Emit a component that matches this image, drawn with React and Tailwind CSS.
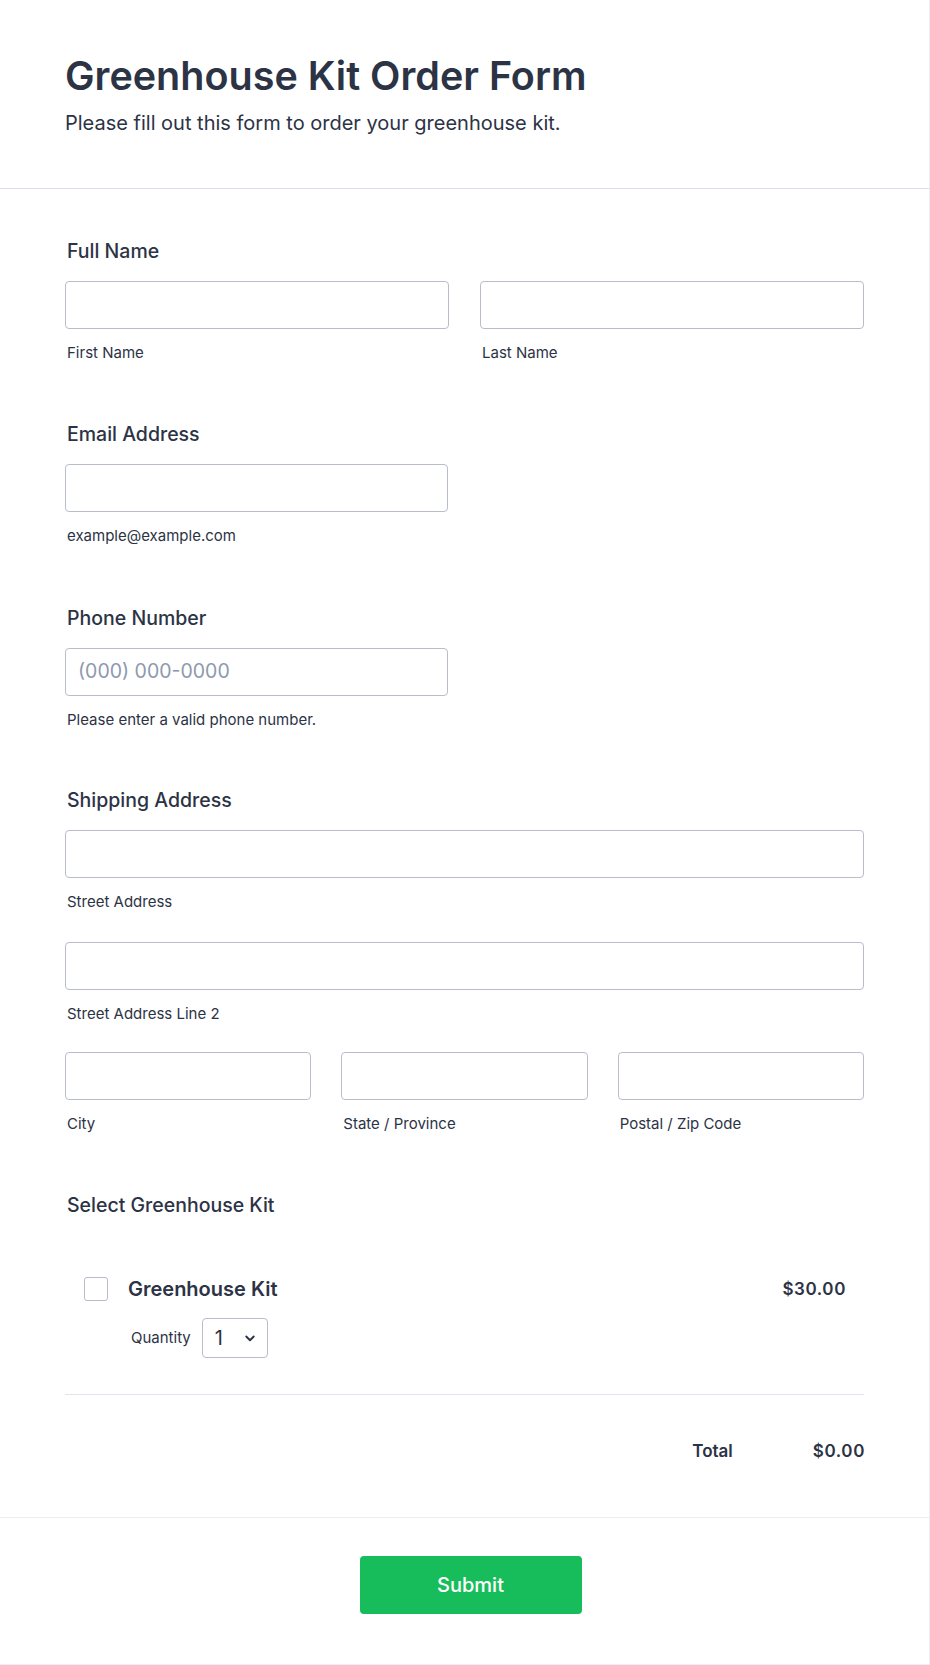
import React from "react";

const txt = "text-[#2c3345]";

function Field({ className = "" }) {
  return (
    <div
      className={`h-[48px] rounded-[4px] border border-[#b8bdc9] bg-white ${className}`}
    />
  );
}

function Sub({ children }) {
  return (
    <div className={`mt-[14px] text-[15px] leading-[20px] ${txt} pl-[2px]`}>
      {children}
    </div>
  );
}

function Label({ children }) {
  return (
    <div className={`text-[19.5px] leading-[24px] font-medium ${txt} pl-[2px] mb-[18px]`}>
      {children}
    </div>
  );
}

export default function App() {
  return (
    <div
      className="w-[930px] min-h-[1665px] bg-white border-r border-b border-[#ededf5]"
      style={{ fontFamily: "Inter, 'Noto Sans', sans-serif" }}
    >
      {/* Header */}
      <div className="px-[65px] pt-[52px] pb-[51px] border-b border-[#dcdcea]">
        <h1 className={`text-[39.5px] leading-[48px] font-semibold ${txt}`}>
          Greenhouse Kit Order Form
        </h1>
        <p className={`mt-[9px] text-[20px] leading-[28px] ${txt}`}>
          Please fill out this form to order your greenhouse kit.
        </p>
      </div>

      {/* Body */}
      <div className="px-[65px] pt-[50px]">
        {/* Full Name */}
        <div>
          <Label>Full Name</Label>
          <div className="grid grid-cols-2 gap-[31px]">
            <div>
              <Field />
              <Sub>First Name</Sub>
            </div>
            <div>
              <Field />
              <Sub>Last Name</Sub>
            </div>
          </div>
        </div>

        {/* Email */}
        <div className="mt-[59px]">
          <Label>Email Address</Label>
          <div className="w-[383px]">
            <Field />
            <Sub>example@example.com</Sub>
          </div>
        </div>

        {/* Phone */}
        <div className="mt-[60px]">
          <Label>Phone Number</Label>
          <div className="w-[383px]">
            <div className="h-[48px] rounded-[4px] border border-[#b8bdc9] bg-white flex items-center px-[12px]">
              <span className="text-[19.5px] text-[#8d99ae]">(000) 000-0000</span>
            </div>
            <Sub>Please enter a valid phone number.</Sub>
          </div>
        </div>

        {/* Shipping */}
        <div className="mt-[58px]">
          <Label>Shipping Address</Label>
          <Field />
          <Sub>Street Address</Sub>
          <div className="mt-[30px]">
            <Field />
            <Sub>Street Address Line 2</Sub>
          </div>
          <div className="mt-[28px] grid grid-cols-3 gap-[30px]">
            <div>
              <Field />
              <Sub>City</Sub>
            </div>
            <div>
              <Field />
              <Sub>State / Province</Sub>
            </div>
            <div>
              <Field />
              <Sub>Postal / Zip Code</Sub>
            </div>
          </div>
        </div>

        {/* Select Kit */}
        <div className="mt-[59px]">
          <div className={`text-[19.5px] leading-[24px] font-medium ${txt} pl-[2px]`}>
            Select Greenhouse Kit
          </div>

          <div className="mt-[60px] pl-[19px] pr-[18px] flex items-start justify-between">
            <div className="flex items-start">
              <div className="w-[24px] h-[24px] rounded-[3px] border border-[#b8bdc9] bg-white" />
              <div className="ml-[20px]">
                <div className={`text-[20px] leading-[24px] font-semibold ${txt}`}>
                  Greenhouse Kit
                </div>
                <div className="mt-[17px] flex items-center">
                  <span className={`text-[15px] ${txt} ml-[3px]`}>Quantity</span>
                  <div className="ml-[11px] w-[66px] h-[40px] rounded-[4px] border border-[#b8bdc9] flex items-center pl-[12px] pr-[8px] justify-between">
                    <span className={`text-[20px] ${txt}`}>1</span>
                    <svg width="18" height="18" viewBox="0 0 24 24" fill="none" stroke="#2c3345" strokeWidth="2.5" strokeLinecap="round" strokeLinejoin="round">
                      <path d="M7 10l5 5 5-5" />
                    </svg>
                  </div>
                </div>
              </div>
            </div>
            <div className={`text-[17px] leading-[24px] font-semibold tracking-[0.6px] ${txt}`}>
              $30.00
            </div>
          </div>

          <div className="mt-[36px] border-t border-[#e3e3ee]" />

          <div className="mt-[44px] flex justify-end items-center -mr-[1px]">
            <span className={`text-[17px] font-semibold ${txt}`}>Total</span>
            <span className={`ml-[80px] text-[17px] font-semibold tracking-[0.6px] ${txt}`}>
              $0.00
            </span>
          </div>
        </div>
      </div>

      {/* Footer */}
      <div className="mt-[52px] border-t border-[#ececf3] pt-[38px] pb-[50px] flex justify-center pl-[12px]">
        <button className="w-[222px] h-[58px] rounded-[4px] bg-[#18bd5b] text-white text-[20px] font-medium">
          Submit
        </button>
      </div>
    </div>
  );
}
